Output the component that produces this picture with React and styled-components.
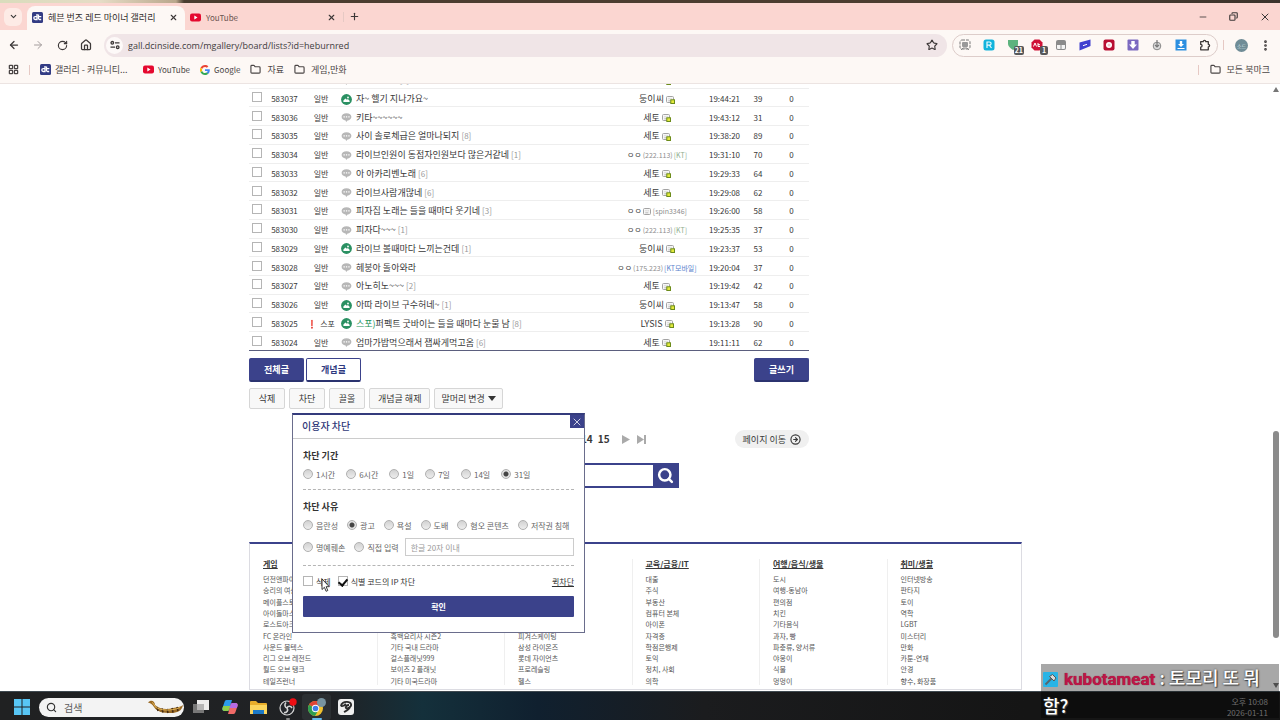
import React from 'react';
import styled, { createGlobalStyle, css } from 'styled-components';
import {
  ArrowLeft,
  ArrowRight,
  ChevronDown,
  CircleArrowRight,
  Copy,
  EllipsisVertical,
  Folder,
  House,
  LayoutGrid,
  Minus,
  Plus,
  RotateCw,
  Search,
  Star,
  X,
} from 'lucide-react';

const NAVY = '#3b428b';

const GlobalStyle = createGlobalStyle`
  * {
    box-sizing: border-box;
  }

  body {
    margin: 0;
    overflow: hidden;
    font-family: 'Noto Sans CJK KR', sans-serif;
    font-size: 9px;
    color: #383838;
  }

  button, input, select {
    margin: 0;
    padding: 0;
    border: 0;
    font: inherit;
    color: inherit;
    background: none;
  }

  a {
    color: inherit;
    text-decoration: none;
  }

  svg {
    display: block;
    flex: none;
  }
`;

const Screen = styled.div`
  position: relative;
  display: flex;
  flex-direction: column;
  height: 100vh;
  background: #fff;
`;

/* browser frame */

const Wallpaper = styled.div`
  height: 3px;
  background: linear-gradient(90deg, #d9dcbc 0, #e6dcc6 100px, #b9a78c 176px, #4b3d30 184px, #4b3d30 80%, #3c332c 100%);
`;

const TabStrip = styled.div`
  display: flex;
  align-items: center;
  height: 27px;
  padding-left: 4px;
  background: #fbd6d1;
`;

const TabSearch = styled.button`
  display: grid;
  place-items: center;
  width: 18px;
  height: 18px;
  margin-right: 5px;
  border-radius: 6px;
  background: #fdebe6;
`;

const Tab = styled.div`
  display: flex;
  align-items: center;
  align-self: flex-end;
  gap: 5px;
  width: 158px;
  height: 24px;
  padding: 0 6px 2px 5px;
  border-radius: 8px 8px 0 0;
  font-size: ${(p) => (p.$latin ? 8 : 9)}px;
  color: ${(p) => (p.$active ? '#2f2b2b' : '#6b5552')};
  background: ${(p) => (p.$active ? '#fdf8f5' : 'transparent')};

  span {
    flex: 1;
    white-space: nowrap;
  }
`;

const IconButton = styled.button`
  display: grid;
  place-items: center;
  width: ${(p) => p.$w || 24}px;
  height: 16px;
  color: ${(p) => p.$color || '#3d3838'};
`;

const Divider = styled.span`
  width: 1px;
  height: 10px;
  background: #e6c9c4;
`;

const WindowControls = styled.div`
  display: flex;
  margin-left: auto;
`;

const Toolbar = styled.div`
  display: flex;
  align-items: center;
  height: 30px;
  padding: 0 3px 0 2px;
  background: #fdf8f5;
`;

const AddressBar = styled.label`
  display: flex;
  align-items: center;
  flex: 1;
  gap: 5px;
  height: 23px;
  margin: 0 5px 0 6px;
  padding: 0 7px 0 2px;
  border-radius: 12px;
  background: #f0e5e7;
`;

const SiteInfo = styled.span`
  display: grid;
  place-items: center;
  width: 17px;
  height: 17px;
  border-radius: 50%;
  background: #fdf9f8;
`;

const AddressInput = styled.input`
  flex: 1;
  min-width: 0;
  font-family: 'Open Sans', 'Noto Sans', sans-serif;
  font-size: 9px;
  color: #413c3e;
  outline: 0;
`;

const Extensions = styled.div`
  display: flex;
  align-items: center;
  height: 23px;
  margin-right: 5px;
  border: 1px solid #ddcdca;
  border-radius: 12px;
`;

const ExtensionButton = styled.button`
  position: relative;
  display: grid;
  place-items: center;
  width: 24px;
  height: 20px;
`;

const ExtensionBadge = styled.span`
  position: absolute;
  right: 1px;
  bottom: 0;
  min-width: 8px;
  padding: 0 1px;
  border-radius: 2px;
  font-size: 7px;
  font-weight: 700;
  line-height: 9px;
  color: #fff;
  background: #57585a;
`;

const Avatar = styled.button`
  width: 13px;
  height: 13px;
  margin: 0 5px 0 11px;
  border-radius: 50%;
  font-size: 5px;
  line-height: 13px;
  color: #d5e2e6;
  background: #6f8c96;
`;

const Bookmarks = styled.nav`
  display: flex;
  align-items: center;
  gap: 10px;
  height: 24px;
  padding: 0 10px 4px 8px;
  border-bottom: 1px solid #ece4e2;
  color: #4b4646;
  background: #fdf8f5;
`;

const Bookmark = styled.a`
  display: flex;
  align-items: center;
  gap: ${(p) => (p.$folder ? 6 : 4)}px;
  min-width: ${(p) => (p.$wide ? 93 : 0)}px;
  font-size: ${(p) => (p.$latin ? 8 : 9)}px;
  white-space: nowrap;
`;

const BookmarkEnd = styled.div`
  display: flex;
  align-items: center;
  gap: 11px;
  margin-left: auto;
`;

/* page */

const Viewport = styled.div`
  display: flex;
  flex: 1;
  min-height: 0;
  overflow: hidden;
`;

const Scroller = styled.div`
  flex: 1;
  min-width: 0;
  overflow: hidden;
`;

/* pulled up so the list starts part way through a row */
const Page = styled.div`
  width: 773px;
  margin: -14px auto 0;
`;

const Board = styled.main`
  width: 560px;
`;

const ScrollTrack = styled.div`
  display: flex;
  flex-direction: column;
  align-items: center;
  width: 9px;
  padding: 3px 0;

  &::before, &::after {
    content: '';
    border: 3px solid transparent;
  }

  &::before {
    border-top: 0;
    border-bottom: 5px solid #777;
  }

  &::after {
    border-bottom: 0;
    border-top: 5px solid #777;
  }
`;

const ThumbLane = styled.div`
  display: flex;
  flex: 1;
  flex-direction: column;
  justify-content: flex-end;
  padding-bottom: 45px;
`;

const Thumb = styled.div`
  width: 6px;
  height: 38%;
  border-radius: 3px;
  background: #8b8b8b;
`;

const PostTable = styled.table`
  width: 100%;
  height: 281px;
  table-layout: fixed;
  border-collapse: collapse;
  font-size: 8px;
  line-height: 12px;
`;

const PostRow = styled.tr`
  border-bottom: 1px solid #eeeeee;

  &:last-child {
    border-bottom-color: #5b5e7e;
  }

  td {
    padding: 3px 0 0;
    text-align: center;
    white-space: nowrap;
  }
`;

const Tick = styled.input.attrs({ type: 'checkbox' })`
  appearance: none;
  display: block;
  flex: none;
  width: 10px;
  height: 10px;
  border: 1px solid #b5b5b5;
  background: #fff;

  ${(p) =>
    p.checked &&
    css`
      display: grid;
      place-items: center;

      &::after {
        content: '';
        width: 4px;
        height: 7px;
        border: solid #111;
        border-width: 0 2px 2px 0;
        transform: rotate(40deg);
      }
    `}
`;

const TickCell = styled.td`
  && {
    padding: 0 0 1px 3px;
  }
`;

const Title = styled.a`
  display: flex;
  align-items: center;
  gap: 4px;
  padding-left: 4px;
  font-size: 9px;

  em {
    font-style: normal;
    color: #23935b;
  }

  small {
    margin-left: 2px;
    font-size: 8px;
    color: #999;
  }
`;

const Writer = styled.span`
  display: flex;
  align-items: center;
  justify-content: center;
  gap: ${(p) => (p.$guest ? 1 : 2)}px;
  font-size: ${(p) => (p.$guest ? 8 : 9)}px;

  small {
    font-size: 7px;
    color: #8d8d8d;
  }
`;

const Carrier = styled.small`
  && {
    color: ${(p) => (p.$mobile ? '#5a82cc' : '#8fae8c')};
  }
`;

const Spoiler = styled.span`
  b {
    margin-right: 3px;
    color: #e0264a;
  }
`;

const Row = styled.div`
  display: flex;
  gap: ${(p) => p.$gap}px;
  margin-top: ${(p) => p.$top}px;
`;

const BigButton = styled.button`
  width: 55px;
  height: 24px;
  border: 1px solid ${NAVY};
  border-bottom: 2px solid #2b336f;
  border-radius: 2px;
  font-weight: 700;
  color: ${(p) => (p.$outline ? '#2f3a80' : '#fff')};
  background: ${(p) => (p.$outline ? '#fff' : NAVY)};

  &:last-child {
    margin-left: auto;
  }
`;

const Manage = styled.div`
  position: relative;
  display: flex;
  gap: 4px;
  margin-top: 6px;
`;

const toolStyle = css`
  height: 21px;
  border: 1px solid #d6d6d6;
  border-radius: 2px;
  background: #f8f8f8;
`;

const ToolButton = styled.button`
  ${toolStyle}
  min-width: 36px;
  padding: 0 8px;
`;

const HeadSelect = styled.label`
  ${toolStyle}
  display: flex;
  align-items: center;
  padding: 0 6px;

  select {
    appearance: none;
    width: 47px;
    outline: 0;
  }
`;

const Pager = styled.div`
  display: flex;
  align-items: center;
  justify-content: flex-end;
  gap: 89px;
  margin-top: 21px;
`;

const Pages = styled.nav`
  display: flex;
  align-items: center;
  gap: 5px;
  font-size: 10px;
  font-weight: 700;
  line-height: 14px;

  svg {
    margin-left: 2px;
  }
`;

const PageJump = styled.button`
  display: flex;
  align-items: center;
  gap: 4px;
  height: 18px;
  padding: 0 8px;
  border-radius: 9px;
  background: #f0f0f0;
`;

const SearchForm = styled.form`
  display: flex;
  width: 300px;
  height: 25px;
  margin: 15px auto 0;
  border: 2px solid ${NAVY};

  input {
    flex: 1;
    min-width: 0;
    padding: 0 6px;
  }

  button {
    display: grid;
    place-items: center;
    width: 24px;
    color: #fff;
    background: ${NAVY};
  }
`;

const Directory = styled.footer`
  display: grid;
  grid-template-columns: repeat(6, 1fr);
  margin-top: 54px;
  padding: 15px 6px 4px 0;
  border: 1px solid #dcdce2;
  border-top: 2px solid ${NAVY};
`;

const Category = styled.section`
  height: 126px;
  padding-left: 13px;
  border-right: 1px solid #efefef;

  &:last-child {
    border-right: 0;
  }

  h2 {
    margin: 0 0 6px;
    font-size: 8px;
    line-height: 9px;
    text-decoration: underline;
  }

  ul {
    display: grid;
    grid-auto-rows: 1fr;
    height: 113px;
    margin: 0;
    padding: 0;
    list-style: none;
    font-size: 7px;
    line-height: 11px;
    color: #555;
  }
`;

/* block dialog */

const Dialog = styled.div`
  position: absolute;
  top: 25px;
  left: 43px;
  z-index: 2;
  width: 293px;
  height: 220px;
  border: 1px solid #6a6d8c;
  border-top: 2px solid #343b7c;
  font-size: 8px;
  color: #666;
  background: #fff;
`;

const DialogHead = styled.div`
  display: flex;
  justify-content: space-between;
  height: 24px;
  border-bottom: 1px solid #ccc;

  h2 {
    margin: 0 0 0 9px;
    font-size: 10px;
    font-weight: 500;
    line-height: 21px;
    color: #2f3878;
  }

  button {
    display: grid;
    place-items: center;
    width: 14px;
    height: 13px;
    color: #fff;
    background: ${NAVY};
  }
`;

const Group = styled.fieldset`
  display: flex;
  flex-direction: column;
  gap: 8px;
  min-width: 0;
  margin: 0 10px;
  padding: 12px 0 ${(p) => p.$bottom}px;
  border: 0;
  border-bottom: 1px dashed #b5b5b5;

  strong {
    font-size: 9px;
    line-height: 10px;
    color: #333;
  }
`;

const Choices = styled.div`
  display: flex;
  align-items: center;
  gap: ${(p) => p.$gap}px;
  height: 10px;

  & + & {
    height: 18px;
  }
`;

const Choice = styled.label`
  display: flex;
  align-items: center;
  gap: 3px;
  white-space: nowrap;
`;

const Radio = styled.input.attrs({ type: 'radio' })`
  appearance: none;
  width: 10px;
  height: 10px;
  border: 1px solid #b0b0b0;
  border-radius: 50%;
  background: linear-gradient(#d2d2d2, #ededed);

  &:checked {
    background: radial-gradient(circle, #444 0 2px, #e2e2e2 3px);
  }
`;

const ReasonInput = styled.input`
  flex: 1;
  min-width: 0;
  height: 18px;
  margin-left: -3px;
  padding: 0 5px;
  border: 1px solid #ccc;

  &::placeholder {
    color: #999;
    opacity: 1;
  }
`;

const Options = styled.div`
  display: flex;
  align-items: center;
  gap: 7px;
  height: 12px;
  margin: 9px 10px;
  color: #333;

  a {
    margin-left: auto;
    text-decoration: underline;
  }
`;

const Confirm = styled.button`
  display: block;
  width: calc(100% - 20px);
  height: 21px;
  margin: 0 10px;
  border-radius: 1px;
  font-weight: 700;
  color: #fff;
  background: ${NAVY};
`;

const Pointer = styled.svg`
  position: absolute;
  top: 163px;
  left: 28px;
`;

/* desktop */

const Taskbar = styled.div`
  display: flex;
  align-items: center;
  height: 29px;
  padding: 2px 12px 0 14px;
  background: linear-gradient(90deg, #202122 0, #202225 26%, #14303b 33%, #10202f 42%, #1b1c1e 55%, #151515 80%);
  border-top: 1px solid #3f4950;
`;

const TaskSearch = styled.label`
  display: flex;
  align-items: center;
  gap: 7px;
  width: 145px;
  height: 19px;
  margin: 0 2px 0 9px;
  padding-left: 7px;
  border-radius: 10px;
  color: #333;
  background: #f3f3f3;

  input {
    flex: 1;
    min-width: 0;
    font-size: 10px;
  }

  input::placeholder {
    color: #5c5c5c;
    opacity: 1;
  }
`;

const TaskButton = styled.button`
  position: relative;
  display: grid;
  place-items: center;
  width: 29px;
  height: 26px;
  border-radius: 3px;
  background: ${(p) => (p.$current ? '#2b2f32' : 'none')};
`;

const RunningMark = styled.span`
  position: absolute;
  bottom: 0;
  width: ${(p) => (p.$current ? 10 : 4)}px;
  height: 2px;
  border-radius: 1px;
  background: ${(p) => (p.$current ? '#63b9ee' : '#8a8a8a')};
`;

const Clock = styled.div`
  margin-left: auto;
  font-size: 8px;
  line-height: 11px;
  text-align: right;
  color: #a5a5a5;
`;

const ChatOverlay = styled.div`
  position: absolute;
  right: 1px;
  bottom: 2px;
  z-index: 3;
  width: 238px;
  padding-left: 2px;
  font-size: 18px;
  font-weight: 500;
  line-height: 26px;
  color: #fff;
  background: rgba(0, 0, 0, 0.34);
  text-shadow: 0 0 2px #333, 1px 1px 1px #444;
  pointer-events: none;

  svg {
    display: inline-block;
    vertical-align: -2px;
    margin-right: 6px;
  }

  b {
    font-family: Roboto, sans-serif;
    font-size: 17px;
    color: #bd1647;
    text-shadow: 0 0 1px #7d0c2c;
  }
`;

/* drawings */

const DcIcon = () => (
  <svg width="11" height="11" viewBox="0 0 11 11">
    <rect width="11" height="11" rx="1.5" fill="#333c84" />
    <path d="M5 2v5.5H3.200a1.300 1.300 0 0 1 0-2.800H5M6.500 2.500v3.800a1.200 1.200 0 0 0 1.200 1.200h1.500M6.500 4.700h2.800" fill="none" stroke="#fff" strokeWidth="1.300" />
  </svg>
);

const YouTubeIcon = () => (
  <svg width="11" height="11" viewBox="0 0 11 11">
    <rect y="1.5" width="11" height="8" rx="2" fill="#e5092f" />
    <path d="M4.3 3.6v3.8l3.2-1.9z" fill="#fff" />
  </svg>
);

const GoogleIcon = () => (
  <svg width="10" height="10" viewBox="0 0 48 48">
    <path fill="#ea4335" d="M24 9.5c3.5 0 6.700 1.200 9.200 3.600l6.900-6.900C35.900 2.400 30.500 0 24 0 14.600 0 6.500 5.400 2.600 13.200l8 6.200C12.400 13.700 17.700 9.500 24 9.500z" />
    <path fill="#4285f4" d="M47 24.600c0-1.600-.2-3.100-.4-4.600H24v9h12.900c-.6 3-2.300 5.500-4.800 7.200l7.700 6C44.400 38 47 31.800 47 24.600z" />
    <path fill="#fbbc05" d="M10.500 28.600a14.500 14.500 0 0 1 0-9.200l-8-6.200a24 24 0 0 0 0 21.600z" />
    <path fill="#34a853" d="M24 48c6.500 0 11.900-2.100 15.900-5.800l-7.700-6c-2.200 1.500-4.900 2.300-8.200 2.300-6.300 0-11.600-4.200-13.500-9.900l-8 6.200C6.500 42.600 14.600 48 24 48z" />
  </svg>
);

const TuneIcon = () => (
  <svg width="10" height="10" viewBox="0 0 10 10" fill="none" stroke="#3d3838" strokeWidth="1.300">
    <circle cx="2.300" cy="2.800" r="1.300" />
    <path d="M5 2.800h4.500M.5 7.200H5" />
    <circle cx="7.700" cy="7.200" r="1.300" />
  </svg>
);

const PuzzleIcon = () => (
  <svg width="12" height="12" viewBox="0 0 12 12">
    <path
      d="M1.700 2.700h2.500a1.300 1.300 0 0 1 2.600 0h2.500v2.600a1.300 1.300 0 0 1 0 2.600v2.900H1.700V8.200a1.400 1.400 0 0 0 0-2.800z"
      fill="none"
      stroke="#3d3838"
      strokeWidth="1.300"
      strokeLinejoin="round"
    />
  </svg>
);

const PictureIcon = () => (
  <svg width="11" height="11" viewBox="0 0 11 11">
    <circle cx="5.500" cy="5.500" r="5.400" fill="#2a9062" />
    <path d="M2.400 7.900V6.500l2-2 1.500 1.300 1-.7 1.700 1.700v1.100z" fill="#fff" />
    <circle cx="7" cy="3.500" r=".9" fill="#fff" />
  </svg>
);

const BubbleIcon = () => (
  <svg width="11" height="11" viewBox="0 0 11 11">
    <path d="M5.500 1.200c2.900 0 4.900 1.500 4.900 3.600S8.500 8.400 6.600 8.500L5.100 9.900 4.600 8.400C2.200 8.200.6 6.900.6 4.800c0-2.100 2-3.600 4.900-3.600z" fill="#b7b7b7" />
    <path d="M2.500 4.900h1.300M4.900 4.900h1.300M7.300 4.900h1.300" stroke="#fff" strokeWidth="1.300" />
  </svg>
);

const MemberIcon = ({ fixed }) => (
  <svg width="9" height="9" viewBox="0 0 9 9">
    <rect x=".5" y="1.500" width="7" height="6" rx="1" fill="#f6f6f6" stroke="#a3a3a3" />
    <path d="M2.300 5.800h3M2.500 3.800h1M4.600 3.800h1" stroke="#aaa" strokeWidth=".8" />
    {fixed && <rect x="4.800" y="4.800" width="3.700" height="3.700" fill="#e3ea3c" stroke="#6c8b1b" />}
  </svg>
);

const extensionIcons = [
  <g key="0"><rect x="1" y="1" width="10" height="9" rx="2" fill="none" stroke="#777" strokeDasharray="3 1" /><rect x="3" y="3" width="6" height="5" rx="1" fill="#999" /><path d="M2 11l2-2h4l2 2" stroke="#888" fill="none" /></g>,
  <g key="1"><rect x=".5" y=".5" width="11" height="11" rx="2.500" fill="#12b3dc" /><path d="M4 9V3h2.500a1.500 1.500 0 0 1 0 3.200H4M6.300 6.200L8.500 9" fill="none" stroke="#e9fbff" strokeWidth="1.200" /></g>,
  <g key="2"><path d="M1 1h10v4c0 3-2 5-5 6C3 9 1 7 1 5z" fill="#5db37e" /></g>,
  <g key="3"><path d="M3.500.5h5l3 3v5l-3 3h-5l-3-3v-5z" fill="#cf1237" /><path d="M2.500 7.500L4 4l1.500 3.500M7 4v3.500h2M7 5.700h2" fill="none" stroke="#fff" /></g>,
  <g key="4"><rect x="1" y="1" width="10" height="10" rx="2" fill="#8b8b8b" /><path d="M2 6h3.500v4H3a1 1 0 0 1-1-1zM6.500 6H10v3a1 1 0 0 1-1 1H6.500z" fill="#f4f4f4" /></g>,
  <g key="5"><path d="M.5 3.500L11.500.5v6.500L8 8.500.5 11.500z" fill="#4140cf" /><path d="M4 6.700l4-1.400" stroke="#fff" /></g>,
  <g key="6"><rect x=".5" y=".5" width="11" height="11" rx="2" fill="#b80e32" /><circle cx="6" cy="6" r="3" fill="#fff" /><circle cx="6" cy="6" r="1.500" fill="#f6c3cd" /></g>,
  <g key="7"><rect x=".5" y=".5" width="11" height="11" rx="1" fill="#7b68c0" /><path d="M4.300 2h3.400v3.500H10L6 10 2 5.500h2.300z" fill="#fff" /></g>,
  <g key="8"><circle cx="6" cy="7" r="3.800" fill="#ddd" stroke="#888" /><path d="M6 1v7M4 6l2 2 2-2" fill="none" stroke="#777" strokeWidth="1.200" /></g>,
  <g key="9"><rect x=".5" y=".5" width="11" height="11" fill="#2d8fe0" /><path d="M4.800 2h2.400v3H9L6 8 3 5h1.800zM2.500 9h7v1h-7z" fill="#fff" /></g>,
];
const extensionCounts = { 2: '21', 3: '1' };

const posts = [
  { no: 583038, title: '본방은하루', replies: 2, writer: '세토', time: '19:44:50', views: 36 },
  { no: 583037, pic: true, title: '자~ 헬기 지나가요~', writer: '둥이씨', time: '19:44:21', views: 39 },
  { no: 583036, title: '키타~~~~~~', writer: '세토', time: '19:43:12', views: 31 },
  { no: 583035, title: '사이 솔로체급은 얼마나되지', replies: 8, writer: '세토', time: '19:38:20', views: 89 },
  { no: 583034, title: '라이브인원이 동접자인원보다 많은거같네', replies: 1, ip: '(222.113)', carrier: '[KT]', time: '19:31:10', views: 70 },
  { no: 583033, title: '아 아카리벤노래', replies: 6, writer: '세토', time: '19:29:33', views: 64 },
  { no: 583032, title: '라이브사람개많네', replies: 6, writer: '세토', time: '19:29:08', views: 62 },
  { no: 583031, title: '피자집 노래는 들을 때마다 웃기네', replies: 3, id: '[spin3346]', time: '19:26:00', views: 58 },
  { no: 583030, title: '피자다~~~', replies: 1, ip: '(222.113)', carrier: '[KT]', time: '19:25:35', views: 37 },
  { no: 583029, pic: true, title: '라이브 볼때마다 느끼는건데', replies: 1, writer: '둥이씨', time: '19:23:37', views: 53 },
  { no: 583028, title: '헤붕아 돌아와라', ip: '(175.223)', carrier: '[KT모바일]', time: '19:20:04', views: 37 },
  { no: 583027, title: '아노히노~~~', replies: 2, writer: '세토', time: '19:19:42', views: 42 },
  { no: 583026, pic: true, title: '아따 라이브 구수허네~', replies: 1, writer: '둥이씨', time: '19:13:47', views: 58 },
  { no: 583025, pic: true, spoiler: true, title: '퍼펙트 굿바이는 들을 때마다 눈물 남', replies: 8, writer: 'LYSIS', time: '19:13:28', views: 90 },
  { no: 583024, title: '엄마가밥먹으래서 잽싸게먹고옴', replies: 6, writer: '세토', time: '19:11:11', views: 62 },
];

const columnWidths = [15, 41, 32, null, 100, 35, 32, 35];

const categories = [
  { name: '게임', items: ['던전앤파이터', '승리의 여신: 니케', '메이플스토리', '아이돌마스터', '로스트아크', 'FC 온라인', '사운드 볼텍스', '리그 오브 레전드', '월드 오브 탱크', '테일즈런너'] },
  { name: '연예/방송', items: ['국내 드라마', '남자 연예인', '여자 연예인', '기타 예능', '인터넷방송', '흑백요리사 시즌2', '기타 국내 드라마', '걸스플래닛999', '보이즈 2 플래닛', '기타 미국드라마'] },
  { name: '스포츠', items: ['국내야구', '해외야구', '해외축구', '농구', '배구', '피겨스케이팅', '삼성 라이온즈', '롯데 자이언츠', '프로레슬링', '헬스'] },
  { name: '교육/금융/IT', items: ['대출', '주식', '부동산', '컴퓨터 본체', '아이폰', '자격증', '학점은행제', '토익', '정치, 사회', '의학'] },
  { name: '여행/음식/생물', items: ['도시', '여행-동남아', '편의점', '치킨', '기타음식', '과자, 빵', '파충류, 양서류', '야옹이', '식물', '멍멍이'] },
  { name: '취미/생활', items: ['인터넷방송', '판타지', '토이', '역학', 'LGBT', '미스터리', '만화', '카툰-연재', '안경', '향수, 화장품'] },
];

const periods = ['1시간', '6시간', '1일', '7일', '14일', '31일'];
const reasons = ['음란성', '광고', '욕설', '도배', '혐오 콘텐츠', '저작권 침해'];

const Browser = () => (
  <header>
    <TabStrip>
      <TabSearch aria-label="탭 검색"><ChevronDown size={9} strokeWidth={3} /></TabSearch>
      <Tab $active>
        <DcIcon />
        <span>헤븐 번즈 레드 마이너 갤러리</span>
        <IconButton $w={12} aria-label="탭 닫기"><X size={9} strokeWidth={3} /></IconButton>
      </Tab>
      <Tab $latin>
        <YouTubeIcon />
        <span>YouTube</span>
        <IconButton $w={12} aria-label="탭 닫기"><X size={9} strokeWidth={3} /></IconButton>
      </Tab>
      <Divider />
      <IconButton $w={20} aria-label="새 탭"><Plus size={11} strokeWidth={2.5} /></IconButton>
      <WindowControls>
        <IconButton $w={31} aria-label="최소화"><Minus size={10} /></IconButton>
        <IconButton $w={31} aria-label="이전 크기로"><Copy size={9} strokeWidth={3} transform="scale(-1 1)" /></IconButton>
        <IconButton $w={31} aria-label="닫기"><X size={12} /></IconButton>
      </WindowControls>
    </TabStrip>
    <Toolbar>
      <IconButton aria-label="뒤로"><ArrowLeft size={12} strokeWidth={2.5} /></IconButton>
      <IconButton $color="#a39c9c" aria-label="앞으로"><ArrowRight size={12} /></IconButton>
      <IconButton aria-label="새로고침"><RotateCw size={11} strokeWidth={2.5} /></IconButton>
      <IconButton aria-label="홈"><House size={12} strokeWidth={2.5} /></IconButton>
      <AddressBar>
        <SiteInfo><TuneIcon /></SiteInfo>
        <AddressInput aria-label="주소" defaultValue="gall.dcinside.com/mgallery/board/lists?id=heburnred" />
        <IconButton $w={16} aria-label="북마크"><Star size={12} strokeWidth={2.3} /></IconButton>
      </AddressBar>
      <Extensions>
        {extensionIcons.map((icon, i) => (
          <ExtensionButton key={i} aria-label={`확장 ${i + 1}`}>
            <svg width="12" height="12" viewBox="0 0 12 12">{icon}</svg>
            {extensionCounts[i] && <ExtensionBadge>{extensionCounts[i]}</ExtensionBadge>}
          </ExtensionButton>
        ))}
        <ExtensionButton aria-label="확장 프로그램"><PuzzleIcon /></ExtensionButton>
      </Extensions>
      <Divider />
      <Avatar>소드</Avatar>
      <IconButton aria-label="메뉴"><EllipsisVertical size={13} strokeWidth={3} /></IconButton>
    </Toolbar>
    <Bookmarks>
      <LayoutGrid size={11} strokeWidth={2.8} />
      <Divider />
      <Bookmark href="#" $wide><DcIcon />갤러리 - 커뮤니티...</Bookmark>
      <Bookmark href="#" $latin><YouTubeIcon />YouTube</Bookmark>
      <Bookmark href="#" $latin><GoogleIcon />Google</Bookmark>
      <Bookmark href="#" $folder><Folder size={11} strokeWidth={2.5} />자료</Bookmark>
      <Bookmark href="#" $folder><Folder size={11} strokeWidth={2.5} />게임,만화</Bookmark>
      <BookmarkEnd>
        <Divider />
        <Bookmark href="#" $folder><Folder size={11} strokeWidth={2.5} />모든 북마크</Bookmark>
      </BookmarkEnd>
    </Bookmarks>
  </header>
);

const PostWriter = ({ post }) => {
  if (post.writer) {
    return <Writer>{post.writer}<MemberIcon fixed /></Writer>;
  }
  return (
    <Writer $guest>
      ㅇㅇ
      {post.id && <MemberIcon />}
      <small>{post.ip || post.id}</small>
      {post.carrier && <Carrier $mobile={post.carrier !== '[KT]'}>{post.carrier}</Carrier>}
    </Writer>
  );
};

const PostList = () => (
  <PostTable>
    <colgroup>
      {columnWidths.map((w, i) => <col key={i} width={w || undefined} />)}
    </colgroup>
    <tbody>
      {posts.map((post) => (
        <PostRow key={post.no}>
          <TickCell><Tick aria-label={`${post.no} 선택`} /></TickCell>
          <td>{post.no}</td>
          <td>{post.spoiler ? <Spoiler><b>❗</b>스포</Spoiler> : '일반'}</td>
          <td>
            <Title href="#">
              {post.pic ? <PictureIcon /> : <BubbleIcon />}
              <span>
                {post.spoiler && <em>스포)</em>}
                {post.title}
                {post.replies && <small>[{post.replies}]</small>}
              </span>
            </Title>
          </td>
          <td><PostWriter post={post} /></td>
          <td>{post.time}</td>
          <td>{post.views}</td>
          <td>0</td>
        </PostRow>
      ))}
    </tbody>
  </PostTable>
);

const BlockDialog = () => (
  <Dialog role="dialog" aria-label="이용자 차단">
    <DialogHead>
      <h2>이용자 차단</h2>
      <button aria-label="닫기"><X size={12} strokeWidth={1.5} /></button>
    </DialogHead>
    <Group $bottom={10}>
      <strong>차단 기간</strong>
      <Choices $gap={11}>
        {periods.map((name) => (
          <Choice key={name}><Radio name="period" defaultChecked={name === '31일'} />{name}</Choice>
        ))}
      </Choices>
    </Group>
    <Group $bottom={9}>
      <strong>차단 사유</strong>
      <Choices $gap={9}>
        {reasons.map((name) => (
          <Choice key={name}><Radio name="reason" defaultChecked={name === '광고'} />{name}</Choice>
        ))}
      </Choices>
      <Choices $gap={9}>
        <Choice><Radio name="reason" />명예훼손</Choice>
        <Choice><Radio name="reason" />직접 입력</Choice>
        <ReasonInput aria-label="직접 입력 사유" placeholder="한글 20자 이내" />
      </Choices>
    </Group>
    <Options>
      <Choice><Tick />삭제</Choice>
      <Choice><Tick checked readOnly />식별 코드의 IP 차단</Choice>
      <a href="#">퀵차단</a>
    </Options>
    <Confirm>확인</Confirm>
    <Pointer width="9" height="15" viewBox="0 0 9 15">
      <path d="M1 1v10.500l2.400-2.200 1.700 4 1.700-.8-1.700-3.800h3.200z" fill="#fff" stroke="#222" strokeWidth=".9" />
    </Pointer>
  </Dialog>
);

const WindowsTaskbar = () => (
  <Taskbar>
    <svg width="16" height="16" viewBox="0 0 16 16">
      <path d="M0 0h7.500v7.500H0zM8.500 0H16v7.500H8.500zM0 8.500h7.500V16H0zM8.500 8.500H16V16H8.500z" fill="#58c6f5" />
    </svg>
    <TaskSearch>
      <Search size={11} strokeWidth={2.5} />
      <input aria-label="검색" placeholder="검색" />
      <svg width="37" height="16" viewBox="0 0 37 16">
        <path d="M1 3.500C4 0 8 2 8 6c4 4 12 5 18 3 4-1 8-1 10-3-1 6-6 8-12 8-8 0-14-1-17-6-2-3-4-4-6-4.500z" fill="#9a6a24" />
        <path d="M10 8l1 4M15 9.500l1 4M20 10l1 4M25 9l1 4.500M30 8l1 4" stroke="#402812" strokeWidth="1.500" />
        <path d="M5 3.500c1 0 2 2 3 4 4 4 16 5 25 1" fill="none" stroke="#e2b558" />
      </svg>
    </TaskSearch>
    <TaskButton aria-label="작업 보기">
      <svg width="16" height="16" viewBox="0 0 16 16"><path d="M0 5h11v9H0z" fill="#777" /><path d="M4 1h12v10H4z" fill="#ededed" /><path d="M4 5h7v6H4z" fill="#b5b5b5" /></svg>
    </TaskButton>
    <TaskButton aria-label="Copilot">
      <svg width="16" height="16" viewBox="0 0 16 16">
        <path d="M4.500 1H10L7.500 10c-.5 1.500-1 2-2.500 2H2.500C.5 12 0 10.500.5 9l2-6c.4-1.300 1-2 2-2z" fill="#2a9bea" />
        <path d="M.5 9C0 10.500.5 12 2.500 12H5c1.500 0 2-.5 2.500-2l.8-3H1.200z" fill="#8fce4a" />
        <path d="M11.500 15H6l2.500-9c.5-1.500 1-2 2.500-2h2.500c2 0 2.500 1.500 2 3l-2 6c-.4 1.300-1 2-2 2z" fill="#ef6a68" />
        <path d="M8.500 6c.5-1.500 1-2 2.500-2h2.500c2 0 2.500 1.500 2 3l-.6 2H7.700z" fill="#b56be4" />
      </svg>
    </TaskButton>
    <TaskButton aria-label="파일 탐색기">
      <svg width="17" height="15" viewBox="0 0 17 15"><path d="M0 2a1 1 0 0 1 1-1h5l2 2h8a1 1 0 0 1 1 1v9H0z" fill="#e9ae2b" /><path d="M0 5h17v9H0z" fill="#fcd65e" /><path d="M3 10h11v4H3z" fill="#1c79c7" /></svg>
    </TaskButton>
    <TaskButton aria-label="OBS">
      <svg width="18" height="18" viewBox="0 0 18 18">
        <circle cx="8" cy="10" r="7" fill="#24262b" stroke="#d5d5d5" strokeWidth="1.200" />
        <path d="M7 4.500c-2 2-1 5 1 5.500M13 10c-1.500-2.500-4-2-5 0M5 14.500c3 .5 4.500-2 3-4.500" fill="none" stroke="#d5d5d5" strokeWidth="1.600" />
        <circle cx="14" cy="4" r="3.700" fill="#ee0f14" />
      </svg>
      <RunningMark />
    </TaskButton>
    <TaskButton $current aria-label="Chrome">
      <svg width="19" height="19" viewBox="0 0 19 19">
        <circle cx="8.500" cy="10.500" r="7.500" fill="#f2c22e" />
        <path d="M8.500 10.500L2 6.700A7.500 7.500 0 0 1 15 6.700z" fill="#df4436" />
        <path d="M8.500 10.500L2 6.700A7.500 7.500 0 0 0 8 18l3.500-6z" fill="#2d9d51" />
        <circle cx="8.500" cy="10.500" r="3.700" fill="#fff" />
        <circle cx="8.500" cy="10.500" r="2.800" fill="#3e7de8" />
        <circle cx="14.500" cy="4.500" r="4.500" fill="#7894a0" />
      </svg>
      <RunningMark $current />
    </TaskButton>
    <TaskButton aria-label="Clip Studio">
      <svg width="16" height="16" viewBox="0 0 16 16">
        <rect width="16" height="16" rx="3" fill="#efefef" />
        <path d="M3 6c2-4 9-4 10-1s-4 5-5 4 1-3 3-3M3 6c0 2 3 1 5-1M12 8c-1 3-4 4-6 5" fill="none" stroke="#2a2a2a" strokeWidth="1.800" />
      </svg>
    </TaskButton>
    <Clock>오후 10:08<br />2026-01-11</Clock>
  </Taskbar>
);

const App = () => (
  <Screen>
    <GlobalStyle />
    <Wallpaper />
    <Browser />
    <Viewport>
      <Scroller>
        <Page>
          <Board>
            <PostList />
            <Row $gap={2} $top={7}>
              <BigButton>전체글</BigButton>
              <BigButton $outline>개념글</BigButton>
              <BigButton>글쓰기</BigButton>
            </Row>
            <Manage>
              <ToolButton>삭제</ToolButton>
              <ToolButton>차단</ToolButton>
              <ToolButton>끌올</ToolButton>
              <ToolButton>개념글 해제</ToolButton>
              <HeadSelect>
                <select aria-label="말머리 변경"><option>말머리 변경</option></select>
                <svg width="8" height="5" viewBox="0 0 8 5"><path d="M0 0h8L4 5z" fill="#333" /></svg>
              </HeadSelect>
              <BlockDialog />
            </Manage>
            <Pager>
              <Pages>
                {[9, 10, 11, 12, 13, 14, 15].map((n) => <a href="#" key={n}>{n}</a>)}
                <svg width="13" height="9" viewBox="0 0 13 9"><path d="M5 0l8 4.500L5 9z" fill="#aaa" /></svg>
                <svg width="9" height="9" viewBox="0 0 9 9"><path d="M0 0l7 4.500L0 9zM7 0h2v9H7z" fill="#aaa" /></svg>
              </Pages>
              <PageJump>페이지 이동<CircleArrowRight size={11} strokeWidth={2.5} /></PageJump>
            </Pager>
            <SearchForm>
              <input aria-label="갤러리 내 검색" />
              <button type="button" aria-label="검색"><Search size={17} strokeWidth={3.5} /></button>
            </SearchForm>
          </Board>
          <Directory>
            {categories.map((c) => (
              <Category key={c.name}>
                <h2>{c.name}</h2>
                <ul>{c.items.map((item) => <li key={item}><a href="#">{item}</a></li>)}</ul>
              </Category>
            ))}
          </Directory>
        </Page>
      </Scroller>
      <ScrollTrack><ThumbLane><Thumb /></ThumbLane></ScrollTrack>
    </Viewport>
    <WindowsTaskbar />
    <ChatOverlay>
      <svg width="15" height="15" viewBox="0 0 15 15">
        <rect width="15" height="15" rx="1" fill="#29b4e6" />
        <path d="M2.500 12.500l6-6" stroke="#54666e" strokeWidth="2" />
        <path d="M6.500 4.500l3-2 3.500 3.500-2 3z" fill="#d8d8d8" stroke="#555" />
      </svg>
      <b>kubotameat</b> : 토모리 또 뭐<br />함?
    </ChatOverlay>
  </Screen>
);

export default App;
